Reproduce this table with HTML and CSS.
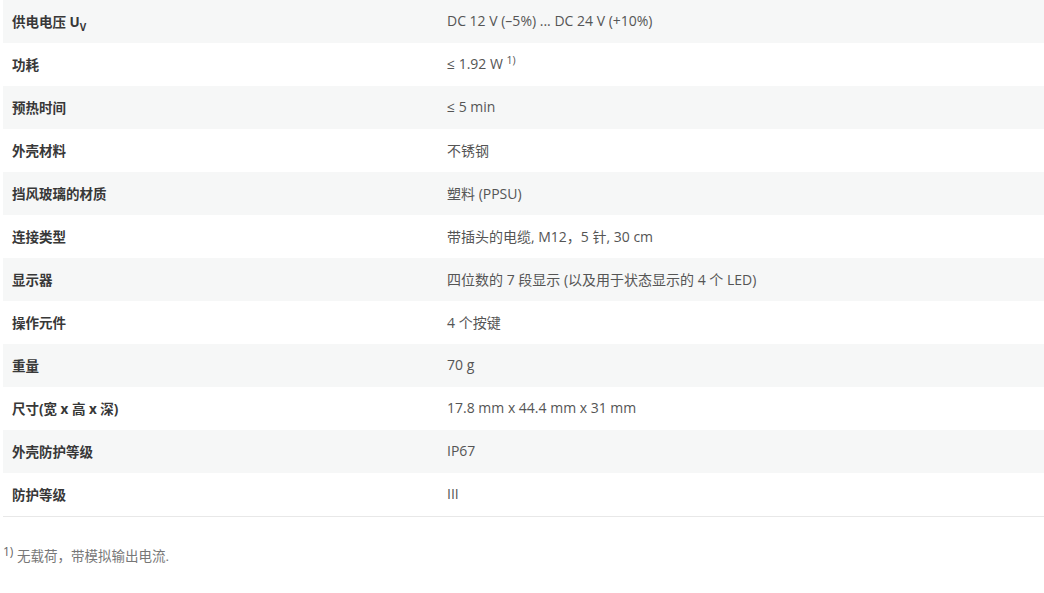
FILE: index.html
```html
<!DOCTYPE html>
<html lang="zh">
<head>
<meta charset="utf-8">
<link rel="stylesheet" href="styles.css">
</head>
<body>
<div class="specs">
  <div class="row alt"><div class="label">供电电压 U<sub>V</sub></div><div class="value">DC 12 V (–5%) ... DC 24 V (+10%)</div></div>
  <div class="row"><div class="label">功耗</div><div class="value">≤ 1.92 W <sup>1)</sup></div></div>
  <div class="row alt"><div class="label">预热时间</div><div class="value">≤ 5 min</div></div>
  <div class="row"><div class="label">外壳材料</div><div class="value">不锈钢</div></div>
  <div class="row alt"><div class="label">挡风玻璃的材质</div><div class="value">塑料 (PPSU)</div></div>
  <div class="row"><div class="label">连接类型</div><div class="value">带插头的电缆, M12，5 针, 30 cm</div></div>
  <div class="row alt"><div class="label">显示器</div><div class="value">四位数的 7 段显示 (以及用于状态显示的 4 个 LED)</div></div>
  <div class="row"><div class="label">操作元件</div><div class="value">4 个按键</div></div>
  <div class="row alt"><div class="label">重量</div><div class="value">70 g</div></div>
  <div class="row"><div class="label">尺寸(宽 x 高 x 深)</div><div class="value">17.8 mm x 44.4 mm x 31 mm</div></div>
  <div class="row alt"><div class="label">外壳防护等级</div><div class="value">IP67</div></div>
  <div class="row last"><div class="label">防护等级</div><div class="value">III</div></div>
</div>
<p class="note"><sup>1)</sup> 无载荷，带模拟输出电流.</p>
</body>
</html>
```
FILE: styles.css
```css
html, body {
  margin: 0;
  padding: 0;
  background: #fff;
}
body {
  font-family: "Open Sans", "DejaVu Sans", "Noto Sans CJK SC", sans-serif;
  font-size: 14px;
  color: #555;
}
.specs {
  margin-left: 3px;
  display: flex;
  flex-direction: column;
}
.row {
  display: grid;
  grid-template-columns: 435px 1fr;
  height: 43px;
  align-items: center;
}
.row > div {
  padding-bottom: 2px;
}
.row.alt {
  background: #f6f7f7;
}
.row.last {
  border-bottom: 1px solid #e8e8e8;
}
.label {
  padding-left: 9px;
  font-size: 13.5px;
  font-weight: bold;
  color: #383838;
}
.value {
  padding-left: 9px;
  color: #555;
}
.label sub {
  font-size: 10px;
  vertical-align: -4px;
  line-height: 0;
}
sup {
  font-size: 10.5px;
  vertical-align: 5px;
  line-height: 0;
}
.note {
  margin: 28px 0 0 3px;
  font-size: 13.5px;
  color: #777;
}
.note sup {
  font-size: 12px;
  color: #666;
}
```
